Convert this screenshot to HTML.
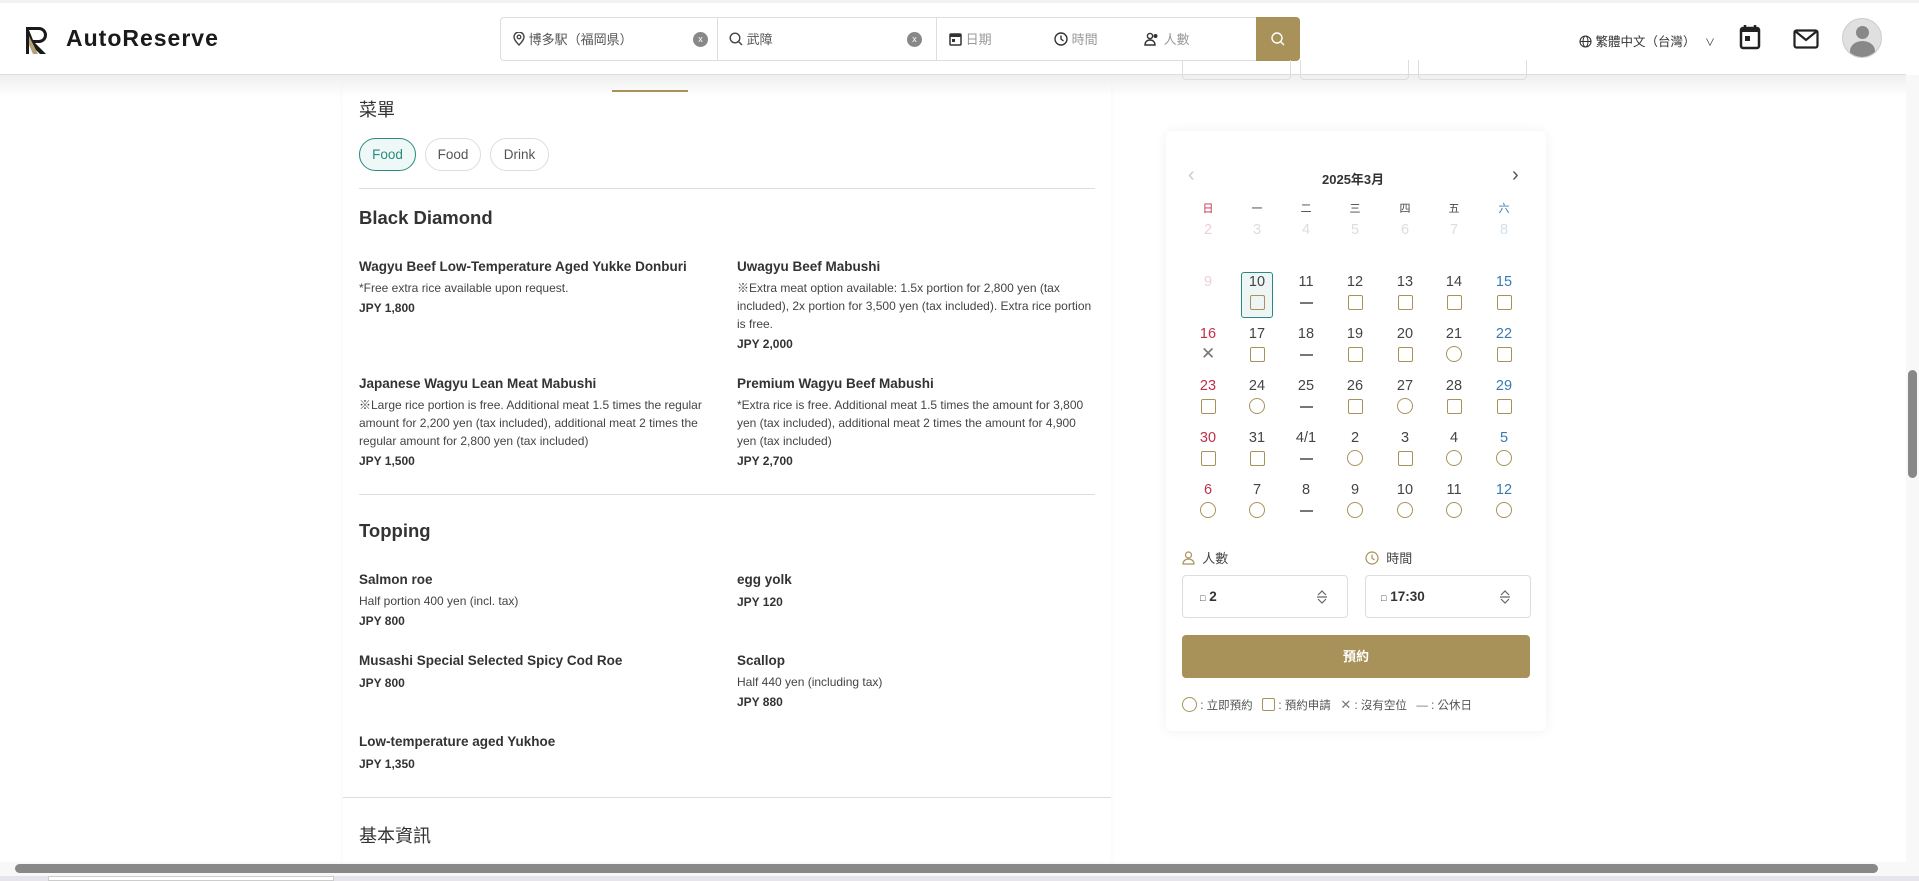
<!DOCTYPE html>
<html><head><meta charset="utf-8">
<style>
*{box-sizing:border-box;margin:0;padding:0}
body{width:1919px;height:881px;overflow:hidden;background:#fff;font-family:"Liberation Sans","Noto Sans CJK TC",sans-serif;color:#333;position:relative}
.abs{position:absolute}
.hdr{left:0;top:3px;width:1906px;height:72px;background:#fff;border-bottom:1px solid #ddd;z-index:5}
.topstrip{left:0;top:0;width:1919px;height:3px;background:#f2f2f2}
.shadow{left:0;top:75px;width:1906px;height:22px;background:linear-gradient(#efefef,rgba(255,255,255,0));z-index:4}
.col{left:343px;top:75px;width:768px;height:790px;background:#fff;box-shadow:0 0 6px rgba(0,0,0,.04)}
.t{position:absolute;white-space:nowrap}
.it{font-size:13.5px;font-weight:bold;color:#333}
.ds{font-size:12px;color:#444;line-height:18px}
.pr{font-size:12px;font-weight:bold;color:#333}
.hr{position:absolute;height:1px;background:#ddd}
.chip{position:absolute;top:138px;height:33px;border:1px solid #ddd;border-radius:17px;font-size:13.5px;line-height:31px;text-align:center;color:#555}
.card{left:1166px;top:131px;width:380px;height:600px;background:#fff;box-shadow:0 0 12px rgba(0,0,0,.06);border-radius:6px}
.cn{position:absolute;width:40px;text-align:center;font-size:14.5px;color:#444}
.sq{position:absolute;width:15px;height:15px;border:1.6px solid #a8925a;border-radius:2px}
.ci{position:absolute;width:16px;height:16px;border:1.6px solid #a8925a;border-radius:50%}
.da{position:absolute;width:13px;height:1.6px;background:#777}
.seg{position:absolute;top:0;height:43px;font-size:13px;color:#555;line-height:43px}
</style></head><body>
<div class="abs topstrip"></div>
<div class="abs hdr">
 <svg class="abs" style="left:24px;top:23px" width="30" height="29" viewBox="0 0 30 29"><path d="M2 1h13a8 8 0 0 1 0 16h-4l11 11h-6L5 17V28H2z" fill="#1a1a1a"/><path d="M5 4h10a5 5 0 0 1 0 10H9L5 4z" fill="#fff"/><path d="M5 10l9 18h-5L5 19z" fill="#b5a27a"/></svg>
 <div class="t" style="left:66px;top:22px;font-size:23px;font-weight:bold;letter-spacing:1px;color:#1a1a1a">AutoReserve</div>
 <div class="abs" style="left:500px;top:14px;width:800px;height:44px;border:1px solid #ddd;border-radius:4px;background:#fff">
  <div class="seg" style="left:12px;width:205px"><svg width="12" height="14" viewBox="0 0 12 14" style="vertical-align:-2px"><path d="M6 13S1 8 1 5a5 5 0 0 1 10 0c0 3-5 8-5 8z" fill="none" stroke="#444" stroke-width="1.4"/><circle cx="6" cy="5" r="1.8" fill="none" stroke="#444" stroke-width="1.3"/></svg> 博多駅（福岡県）<span style="position:absolute;left:180px;top:14px;width:15px;height:15px;border-radius:50%;background:#888;color:#fff;font-size:9px;line-height:15px;text-align:center">x</span></div>
  <div class="abs" style="left:216px;top:0;width:1px;height:42px;background:#ddd"></div>
  <div class="seg" style="left:228px;width:205px"><svg width="14" height="14" viewBox="0 0 14 14" style="vertical-align:-2px"><circle cx="6" cy="6" r="4.8" fill="none" stroke="#444" stroke-width="1.4"/><path d="M9.5 9.5L13 13" stroke="#444" stroke-width="1.4"/></svg> 武障<span style="position:absolute;left:178px;top:14px;width:15px;height:15px;border-radius:50%;background:#888;color:#fff;font-size:9px;line-height:15px;text-align:center">x</span></div>
  <div class="abs" style="left:435px;top:0;width:1px;height:42px;background:#ddd"></div>
  <div class="seg" style="left:448px;color:#999"><svg width="13" height="14" viewBox="0 0 13 14" style="vertical-align:-2px"><rect x="1" y="2" width="11" height="11" rx="1" fill="none" stroke="#333" stroke-width="1.5"/><rect x="1" y="2" width="11" height="3" fill="#333"/><rect x="3" y="7" width="3" height="3" fill="#333"/></svg> 日期</div>
  <div class="seg" style="left:553px;color:#999"><svg width="14" height="14" viewBox="0 0 14 14" style="vertical-align:-2px"><circle cx="7" cy="7" r="6" fill="none" stroke="#333" stroke-width="1.4"/><path d="M7 3.5V7l2.5 2" fill="none" stroke="#333" stroke-width="1.4"/></svg> 時間</div>
  <div class="seg" style="left:643px;color:#999"><svg width="16" height="14" viewBox="0 0 16 14" style="vertical-align:-2px"><circle cx="6" cy="4" r="2.6" fill="none" stroke="#333" stroke-width="1.4"/><path d="M1 13c0-3 2-5 5-5s5 2 5 5z" fill="none" stroke="#333" stroke-width="1.4"/><circle cx="11.5" cy="4" r="2" fill="#333"/></svg> 人數</div>
  <div class="abs" style="left:755px;top:-1px;width:44px;height:44px;background:#a8925a;border-radius:0 4px 4px 0"><svg class="abs" style="left:14px;top:14px" width="16" height="16" viewBox="0 0 16 16"><circle cx="7" cy="7" r="5" fill="none" stroke="#fff" stroke-width="1.4"/><path d="M10.5 10.5L14 14" stroke="#fff" stroke-width="1.4"/></svg></div>
 </div>
 <div class="t" style="left:1579px;top:28px;font-size:12.5px;color:#333"><svg width="13" height="13" viewBox="0 0 13 13" style="vertical-align:-2px"><circle cx="6.5" cy="6.5" r="5.5" fill="none" stroke="#333" stroke-width="1.1"/><ellipse cx="6.5" cy="6.5" rx="2.5" ry="5.5" fill="none" stroke="#333" stroke-width="1"/><path d="M1 6.5h11" stroke="#333"/></svg> 繁體中文（台灣） <span style="font-size:10px;margin-left:6px">∨</span></div>
 <svg class="abs" style="left:1739px;top:21px" width="22" height="26" viewBox="0 0 22 26"><rect x="2" y="4" width="18" height="20" rx="2" fill="none" stroke="#222" stroke-width="2.5"/><rect x="2" y="4" width="18" height="4" fill="#222"/><path d="M6 1v5M16 1v5" stroke="#222" stroke-width="2.5"/><rect x="6" y="12" width="5" height="5" fill="#222"/></svg>
 <svg class="abs" style="left:1793px;top:26px" width="26" height="20" viewBox="0 0 26 20"><rect x="1.5" y="1.5" width="23" height="17" rx="2" fill="none" stroke="#222" stroke-width="2.2"/><path d="M2 2l11 9 11-9" fill="none" stroke="#222" stroke-width="2.2"/></svg>
 <div class="abs" style="left:1842px;top:15px;width:40px;height:40px;border-radius:50%;background:#e0e0e0;border:1px solid #ccc;overflow:hidden"><div class="abs" style="left:13px;top:7px;width:13px;height:13px;border-radius:50%;background:#888"></div><div class="abs" style="left:7px;top:22px;width:25px;height:20px;border-radius:50% 50% 0 0;background:#888"></div></div>
</div>
<div class="abs shadow"></div>
<div class="abs" style="left:612px;top:90px;width:76px;height:2px;background:#a8925a;z-index:6"></div>
<div class="abs" style="left:1182px;top:60px;width:109px;height:20px;border:1px solid #ddd;border-top:none;border-radius:0 0 4px 4px;z-index:6"></div>
<div class="abs" style="left:1300px;top:60px;width:109px;height:20px;border:1px solid #ddd;border-top:none;border-radius:0 0 4px 4px;z-index:6"></div>
<div class="abs" style="left:1418px;top:60px;width:109px;height:20px;border:1px solid #ddd;border-top:none;border-radius:0 0 4px 4px;z-index:6"></div>

<div class="abs col"></div>
<div class="t" style="left:359px;top:96px;font-size:18px;color:#333">菜單</div>
<div class="chip" style="left:359px;width:57px;background:#eef8f6;border-color:#2a8a80;color:#2a8a80">Food</div>
<div class="chip" style="left:425px;width:56px">Food</div>
<div class="chip" style="left:490px;width:59px">Drink</div>
<div class="hr" style="left:359px;top:188px;width:736px"></div>
<div class="t" style="left:359px;top:207px;font-size:18.5px;font-weight:bold">Black Diamond</div>

<div class="t it" style="left:359px;top:259px">Wagyu Beef Low-Temperature Aged Yukke Donburi</div>
<div class="t ds" style="left:359px;top:279px">*Free extra rice available upon request.</div>
<div class="t pr" style="left:359px;top:301px">JPY 1,800</div>
<div class="t it" style="left:737px;top:259px">Uwagyu Beef Mabushi</div>
<div class="t ds" style="left:737px;top:279px">※Extra meat option available: 1.5x portion for 2,800 yen (tax<br>included), 2x portion for 3,500 yen (tax included). Extra rice portion<br>is free.</div>
<div class="t pr" style="left:737px;top:337px">JPY 2,000</div>
<div class="t it" style="left:359px;top:376px">Japanese Wagyu Lean Meat Mabushi</div>
<div class="t ds" style="left:359px;top:396px">※Large rice portion is free. Additional meat 1.5 times the regular<br>amount for 2,200 yen (tax included), additional meat 2 times the<br>regular amount for 2,800 yen (tax included)</div>
<div class="t pr" style="left:359px;top:454px">JPY 1,500</div>
<div class="t it" style="left:737px;top:376px">Premium Wagyu Beef Mabushi</div>
<div class="t ds" style="left:737px;top:396px">*Extra rice is free. Additional meat 1.5 times the amount for 3,800<br>yen (tax included), additional meat 2 times the amount for 4,900<br>yen (tax included)</div>
<div class="t pr" style="left:737px;top:454px">JPY 2,700</div>
<div class="hr" style="left:359px;top:494px;width:736px"></div>
<div class="t" style="left:359px;top:520px;font-size:18.5px;font-weight:bold">Topping</div>
<div class="t it" style="left:359px;top:572px">Salmon roe</div>
<div class="t ds" style="left:359px;top:592px">Half portion 400 yen (incl. tax)</div>
<div class="t pr" style="left:359px;top:614px">JPY 800</div>
<div class="t it" style="left:737px;top:572px">egg yolk</div>
<div class="t pr" style="left:737px;top:595px">JPY 120</div>
<div class="t it" style="left:359px;top:653px">Musashi Special Selected Spicy Cod Roe</div>
<div class="t pr" style="left:359px;top:676px">JPY 800</div>
<div class="t it" style="left:737px;top:653px">Scallop</div>
<div class="t ds" style="left:737px;top:673px">Half 440 yen (including tax)</div>
<div class="t pr" style="left:737px;top:695px">JPY 880</div>
<div class="t it" style="left:359px;top:734px">Low-temperature aged Yukhoe</div>
<div class="t pr" style="left:359px;top:757px">JPY 1,350</div>
<div class="hr" style="left:343px;top:797px;width:768px"></div>
<div class="t" style="left:359px;top:822px;font-size:18px">基本資訊</div>

<div class="abs card"></div>
<div class="t" style="left:1188px;top:164px;font-size:20px;color:#ccc">‹</div>
<div class="t" style="left:1512px;top:164px;font-size:20px;color:#555">›</div>
<div class="t" style="left:1322px;top:169px;font-size:13px;font-weight:bold;color:#333">2025年3月</div>
<div class="abs" style="left:1241px;top:272px;width:32px;height:46px;border:1.5px solid #2a8a80;border-radius:3px;background:#eef6f5"></div>
<div id="cal"></div>
<script>
(function(){
var xs=[1208,1257,1306,1355,1405,1454,1504];
var wd=['日','一','二','三','四','五','六'];
var h='';
for(var i=0;i<7;i++){h+='<div class="cn" style="left:'+(xs[i]-20)+'px;top:200px;font-size:11px;color:'+(i==0?'#c0304a':i==6?'#3a7ab0':'#444')+'">'+wd[i]+'</div>';}
var r0=['2','3','4','5','6','7','8'];
for(i=0;i<7;i++){h+='<div class="cn" style="left:'+(xs[i]-20)+'px;top:222px;color:'+(i==0?'#ecd0d5':i==6?'#d0e0ee':'#ddd')+'">'+r0[i]+'</div>';}
var rows=[['9','10','11','12','13','14','15'],['16','17','18','19','20','21','22'],['23','24','25','26','27','28','29'],['30','31','4/1','2','3','4','5'],['6','7','8','9','10','11','12']];
var ic=[['','s','d','s','s','s','s'],['x','s','d','s','s','c','s'],['s','c','d','s','c','s','s'],['s','s','d','c','s','c','c'],['c','c','d','c','c','c','c']];
for(var r=0;r<5;r++){var y=274+r*52;
 for(i=0;i<7;i++){var col=i==0?'#c0304a':i==6?'#3a7ab0':'#444';if(r==0&&i==0)col='#ecd0d5';
  h+='<div class="cn" style="left:'+(xs[i]-20)+'px;top:'+y+'px;z-index:2;color:'+col+'">'+rows[r][i]+'</div>';
  var k=ic[r][i],cy=y+28;
  if(k=='s')h+='<div class="sq" style="left:'+(xs[i]-7)+'px;top:'+(cy-7)+'px;z-index:2"></div>';
  if(k=='c')h+='<div class="ci" style="left:'+(xs[i]-8)+'px;top:'+(cy-8)+'px"></div>';
  if(k=='d')h+='<div class="da" style="left:'+(xs[i]-6)+'px;top:'+cy+'px"></div>';
  if(k=='x')h+='<div class="t" style="left:'+(xs[i]-7)+'px;top:'+(cy-10)+'px;font-size:17px;color:#777">✕</div>';
 }}
document.getElementById('cal').outerHTML=h;
})();
</script>
<div class="t" style="left:1182px;top:548px;font-size:13px;color:#444"><svg width="13" height="14" viewBox="0 0 13 14" style="vertical-align:-2px"><circle cx="6.5" cy="4" r="3" fill="none" stroke="#a8925a" stroke-width="1.2"/><path d="M1 13c0-3 2.5-5 5.5-5s5.5 2 5.5 5z" fill="none" stroke="#a8925a" stroke-width="1.2"/></svg>&nbsp; 人數</div>
<div class="t" style="left:1365px;top:548px;font-size:13px;color:#444"><svg width="14" height="14" viewBox="0 0 14 14" style="vertical-align:-2px"><circle cx="7" cy="7" r="6" fill="none" stroke="#a8925a" stroke-width="1.2"/><path d="M7 3.5V7l2.5 2" fill="none" stroke="#a8925a" stroke-width="1.2"/></svg>&nbsp; 時間</div>
<div class="abs" style="left:1182px;top:575px;width:166px;height:43px;border:1px solid #ddd;border-radius:4px;background:#fff"></div>
<div class="abs" style="left:1365px;top:575px;width:166px;height:43px;border:1px solid #ddd;border-radius:4px;background:#fff"></div>
<div class="t" style="left:1200px;top:589px;font-size:13.5px;font-weight:bold;color:#333"><span style="font-size:9px;font-weight:normal">□</span> 2</div>
<div class="t" style="left:1381px;top:589px;font-size:13.5px;font-weight:bold;color:#333"><span style="font-size:9px;font-weight:normal">□</span> 17:30</div>
<svg class="abs" style="left:1316px;top:589px" width="12" height="16" viewBox="0 0 12 16"><path d="M2 6l4-4 4 4M2 10l4 4 4-4M1 8h10" fill="none" stroke="#666" stroke-width="1.2"/></svg>
<svg class="abs" style="left:1499px;top:589px" width="12" height="16" viewBox="0 0 12 16"><path d="M2 6l4-4 4 4M2 10l4 4 4-4M1 8h10" fill="none" stroke="#666" stroke-width="1.2"/></svg>
<div class="abs" style="left:1182px;top:635px;width:348px;height:43px;background:#a8925a;border-radius:4px;color:#fff;font-size:13px;font-weight:bold;text-align:center;line-height:43px">預約</div>
<div class="t" style="left:1182px;top:697px;font-size:11.5px;color:#555"><span style="display:inline-block;width:15px;height:15px;border:1.5px solid #a8925a;border-radius:50%;vertical-align:-3px"></span> : 立即預約 &nbsp;&nbsp;<span style="display:inline-block;width:13px;height:13px;border:1.5px solid #a8925a;border-radius:2px;vertical-align:-2px"></span> : 預約申請 &nbsp;&nbsp;<span style="color:#777;font-size:13px">✕</span> : 沒有空位 &nbsp;&nbsp;<span style="color:#777">—</span> : 公休日</div>

<div class="abs" style="left:1906px;top:75px;width:13px;height:800px;background:#f8f8f8"></div>
<div class="abs" style="left:1908px;top:370px;width:9px;height:108px;background:#888;border-radius:5px"></div>
<div class="abs" style="left:0;top:862px;width:1919px;height:14px;background:#f8f8f8"></div>
<div class="abs" style="left:15px;top:864px;width:1863px;height:9px;background:#888;border-radius:5px"></div>
<div class="abs" style="left:0;top:876px;width:1919px;height:5px;background:#e8e4ec"></div>
<div class="abs" style="left:48px;top:876px;width:286px;height:5px;background:#fff;border:1px solid #ccc"></div>
</body></html>
